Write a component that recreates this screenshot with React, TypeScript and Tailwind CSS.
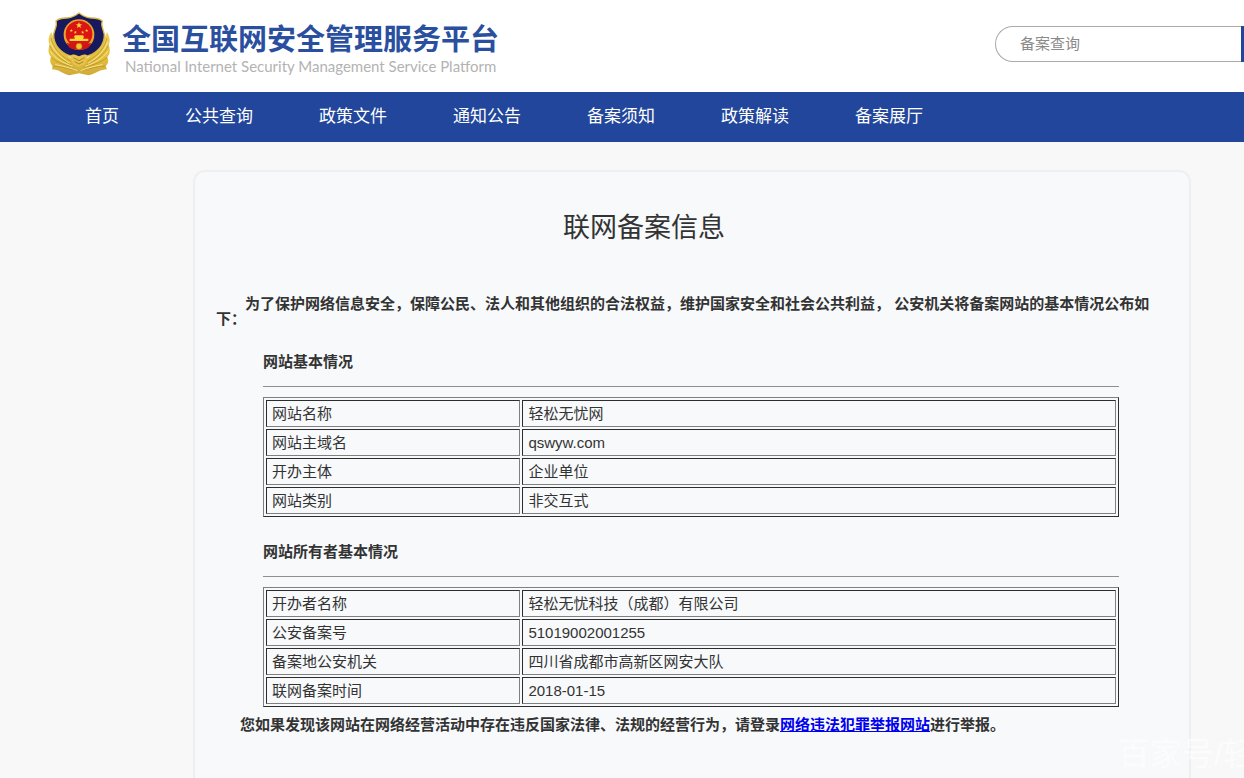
import { Fragment } from 'react';

type Row = [string, string];

const NAV = ['首页', '公共查询', '政策文件', '通知公告', '备案须知', '政策解读', '备案展厅'];

const SITE: Row[] = [
  ['网站名称', '轻松无忧网'],
  ['网站主域名', 'qswyw.com'],
  ['开办主体', '企业单位'],
  ['网站类别', '非交互式'],
];

const OWNER: Row[] = [
  ['开办者名称', '轻松无忧科技（成都）有限公司'],
  ['公安备案号', '51019002001255'],
  ['备案地公安机关', '四川省成都市高新区网安大队'],
  ['联网备案时间', '2018-01-15'],
];

function Star({ x, y, r }: { x: number; y: number; r: number }) {
  const points = Array.from({ length: 10 }, (_, i) => {
    const a = (Math.PI / 5) * i - Math.PI / 2;
    const d = i % 2 ? r * 0.42 : r;
    return `${x + d * Math.cos(a)},${y + d * Math.sin(a)}`;
  }).join(' ');
  return <polygon points={points} fill="#ffd63a" />;
}

function Emblem() {
  return (
    <svg width="62" height="64" viewBox="24 22 186 192" aria-hidden="true" className="shrink-0">
      <defs>
        <linearGradient id="gold" x1="0" y1="0" x2="0" y2="1">
          <stop offset="0" stopColor="#f0d060" />
          <stop offset="0.6" stopColor="#e3bf3c" />
          <stop offset="1" stopColor="#d0aa3a" />
        </linearGradient>
      </defs>
      {/* laurel */}
      <path
        d="M34 82C24 98 24 110 29 121C23 134 25 148 33 157C28 168 31 178 38 184L36 194C56 194 64 206 88 212L117 206L146 212C170 206 180 194 201 194L197 184C205 178 207 168 202 157C210 148 212 134 206 121C211 110 210 98 201 82L180 130L117 180L54 130Z"
        fill="url(#gold)"
      />
      <g fill="none" stroke="#b08a24" strokeWidth="2">
        <path d="M33 100C40 128 56 150 92 170M29 122C40 148 60 164 94 180M33 158C52 174 72 180 102 188M38 184C60 184 84 192 110 198" />
        <path d="M201 100C194 128 178 150 142 170M205 122C194 148 174 164 140 180M201 158C182 174 162 180 132 188M196 184C174 184 150 192 124 198" />
      </g>
      <g fill="none" stroke="#f8e68c" strokeWidth="3">
        <path d="M31 111C40 138 60 158 90 176M31 140C46 163 70 174 98 185M46 180C70 184 92 190 112 198" />
        <path d="M203 111C194 138 174 158 144 176M203 140C188 163 164 174 136 185M188 180C164 184 142 190 122 198" />
      </g>
      {/* shield */}
      <path
        d="M117 25C105 34 92 41 78 40C67 40 57 42 48 49C53 63 43 75 41 90C40 120 62 145 91 154L117 166L143 154C172 145 194 120 193 90C191 75 181 63 187 49C178 42 168 40 156 40C142 41 129 34 117 25Z"
        fill="#18185e"
        stroke="#d9b640"
        strokeWidth="4"
      />
      <circle cx="117" cy="90" r="46" fill="#e8a52c" />
      <circle cx="117" cy="88" r="40" fill="#db1414" />
      <Star x={117} y={62} r={10} />
      <Star x={94} y={78} r={5} />
      <Star x={106} y={83} r={5} />
      <Star x={128} y={83} r={5} />
      <Star x={140} y={78} r={5} />
      <path d="M101 98L105 92H129L133 98H130V102H145V109H89V102H104V98Z" fill="#ffd63a" />
      <path d="M80 114C96 120 138 120 154 114L147 128C134 139 100 139 87 128Z" fill="#cf1616" />
      <circle cx="117" cy="125" r="9" fill="#f2c530" stroke="#b98512" strokeWidth="2" />
      <path d="M90 154C100 145 109 151 117 155C125 151 134 145 144 154L134 178L117 186L100 178Z" fill="#e7c34a" />
      <path d="M100 159L117 168L134 159M104 171L117 178L130 171" fill="none" stroke="#a8842a" strokeWidth="3" />
    </svg>
  );
}

function InfoTable({ label, rows }: { label: string; rows: Row[] }) {
  return (
    <table
      aria-label={label}
      className="w-full table-fixed border-separate border-spacing-[2px] border border-t-[#808080] border-l-[#808080] border-r-[#2d2d2d] border-b-[#2d2d2d]"
    >
      <tbody>
        {rows.map(([name, value]) => (
          <tr key={name}>
            <th
              scope="row"
              className="w-[30%] border border-t-[#2d2d2d] border-l-[#2d2d2d] border-r-[#808080] border-b-[#808080] px-[5px] text-left font-normal leading-[25px]"
            >
              {name}
            </th>
            <td className="border border-t-[#2d2d2d] border-l-[#2d2d2d] border-r-[#808080] border-b-[#808080] px-[5px] leading-[25px]">
              {value}
            </td>
          </tr>
        ))}
      </tbody>
    </table>
  );
}

export default function App() {
  return (
    <div
      lang="zh-CN"
      className="relative flex min-h-screen flex-col overflow-hidden bg-[#f8f8f8] font-['Liberation_Sans','Noto_Sans_CJK_SC',sans-serif] text-[15px] text-[#333]"
    >
      <header className="flex h-[92px] items-start overflow-hidden bg-white pl-12">
        <div className="flex pt-3">
          <Emblem />
          <div className="ml-3 pt-2">
            <div className="whitespace-nowrap text-[29px] font-bold leading-10 text-[#2a4f9f]">
              全国互联网安全管理服务平台
            </div>
            <div className="whitespace-nowrap pl-[3px] font-['Lato',sans-serif] text-[15px] leading-3 text-[#b3b3b3]">
              National Internet Security Management Service Platform
            </div>
          </div>
        </div>
        <form className="-mr-[77px] ml-auto mt-[26px] flex h-9 shrink-0">
          <input
            type="text"
            aria-label="备案查询"
            placeholder="备案查询"
            className="w-[246px] rounded-l-full border border-r-0 border-[#aaa] bg-white pl-6 text-[15px] outline-none placeholder:text-[#8a8a8a]"
          />
          <button type="submit" aria-label="查询" className="w-20 rounded-r-full bg-[#21469b]" />
        </form>
      </header>

      <nav className="flex h-[50px] items-center gap-[66px] bg-[#21469b] pl-[85px] text-[17px] text-white">
        {NAV.map((item) => (
          <a key={item} href="#" className="whitespace-nowrap">
            {item}
          </a>
        ))}
      </nav>

      <main className="mt-7 mr-[53px] ml-[193px] flex-1 rounded-t-xl border-2 border-b-0 border-[#eeeff0] bg-[#f7f9fb] px-[21px]">
        <h1 className="pt-9 pr-[96px] text-center text-[27px] leading-10">联网备案信息</h1>

        <p className="mt-12 indent-[29px] font-bold leading-[15px]">
          为了保护网络信息安全，保障公民、法人和其他组织的合法权益，维护国家安全和社会公共利益， 公安机关将备案网站的基本情况公布如下：
        </p>

        <div className="mr-[49px] ml-[47px] pt-px">
          {[
            { title: '网站基本情况', rows: SITE },
            { title: '网站所有者基本情况', rows: OWNER },
          ].map(({ title, rows }) => (
            <Fragment key={title}>
              <h2 className="mt-[25px] font-bold leading-5">{title}</h2>
              <hr className="mt-[14px] mb-[10px] border-t border-[#8f8f8f]" />
              <InfoTable label={title} rows={rows} />
            </Fragment>
          ))}
        </div>

        <p className="mt-2 ml-6 font-bold leading-5">
          您如果发现该网站在网络经营活动中存在违反国家法律、法规的经营行为，请登录
          <a href="#" className="text-[#0000ee] underline">
            网络违法犯罪举报网站
          </a>
          进行举报。
        </p>
      </main>

      <div className="absolute bottom-1 left-[1118px] whitespace-nowrap text-[32px] leading-10 text-white/60">
        百家号/轻
      </div>
    </div>
  );
}
